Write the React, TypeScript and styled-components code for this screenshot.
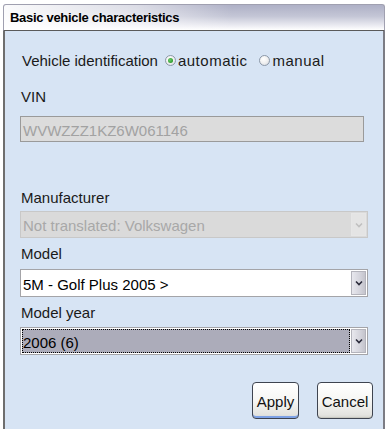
import React from "react";
import styled, { createGlobalStyle } from "styled-components";

const GlobalStyle = createGlobalStyle`
  html, body { margin: 0; padding: 0; background: #ffffff; }
  body { font-family: "Liberation Sans", Arial, sans-serif; }
`;

const Window = styled.div`
  margin: 4px 0 0 3px;
  width: 382px;
  display: flex;
  flex-direction: column;
`;

const TitleBar = styled.div`
  box-sizing: border-box;
  height: 27px;
  display: flex;
  align-items: center;
  padding-left: 6px;
  border: 1px solid #a0a0b0;
  border-bottom: 1px solid #5a5a5a;
  border-radius: 3px 3px 0 0;
  background:
    linear-gradient(to right, rgba(255,255,255,0.95) 0%, rgba(255,255,255,0.55) 35%, rgba(255,255,255,0) 60%),
    linear-gradient(to bottom, #aeb0c6 0%, #c4c6d6 45%, #eeeef4 85%, #ffffff 100%);
  font-weight: bold;
  font-size: 13px;
  letter-spacing: -0.3px;
  color: #000;
`;

const Panel = styled.div`
  box-sizing: border-box;
  height: 398px;
  background: #d7e4f4;
  border-left: 2px solid #6e6e6e;
  border-right: 2px solid #7c7c84;
  padding: 0 10px 0 15px;
  display: flex;
  flex-direction: column;
  font-size: 15px;
  color: #1a1a1a;
`;

const IdentRow = styled.div`
  margin-top: 19px;
  height: 20px;
  display: flex;
  align-items: center;
  padding-left: 2px;
`;

const RadioLabel = styled.span<{ $ml: number }>`
  display: inline-flex;
  align-items: center;
  margin-left: ${(p) => p.$ml}px;
  letter-spacing: 0.5px;
`;

const RadioCircle = styled.span<{ $checked?: boolean }>`
  box-sizing: border-box;
  width: 11px;
  height: 11px;
  border-radius: 50%;
  border: 1px solid #8c98a8;
  background: radial-gradient(circle at 40% 35%, #ffffff 0%, #f0f0f0 50%, #d0d4dc 100%);
  margin-right: 2px;
  display: inline-flex;
  align-items: center;
  justify-content: center;
  &::after {
    content: "";
    display: ${(p) => (p.$checked ? "block" : "none")};
    width: 5px;
    height: 5px;
    border-radius: 50%;
    background: radial-gradient(circle at 40% 40%, #6ccf6c 0%, #2f9a2f 70%, #5aa85a 100%);
  }
`;

const Label = styled.div<{ $mt: number }>`
  margin-top: ${(p) => p.$mt}px;
  height: 20px;
  line-height: 20px;
  padding-left: 1px;
`;

const TextBox = styled.div<{ $mt: number }>`
  box-sizing: border-box;
  margin-top: ${(p) => p.$mt}px;
  width: 344px;
  height: 26px;
  border: 1px solid #9a9a9a;
  background: #dcdcdc;
  color: #a2a2a2;
  padding: 3px 0 0 2px;
  display: flex;
  align-items: center;
`;

type SelectProps = { $mt: number; $variant: "disabled" | "normal" | "focused" };

const Select = styled.div<SelectProps>`
  box-sizing: border-box;
  margin-top: ${(p) => p.$mt}px;
  width: 348px;
  height: ${(p) => (p.$variant === "disabled" ? 27 : 28)}px;
  border: 1px solid ${(p) => (p.$variant === "disabled" ? "#c8c8c8" : "#a4a4a8")};
  background: ${(p) => (p.$variant === "disabled" ? "#dadada" : "#ffffff")};
  color: ${(p) => (p.$variant === "disabled" ? "#a8a8a8" : "#000")};
  display: flex;
  align-items: stretch;
  padding: 1px;
`;

const SelectValue = styled.div<{ $focused?: boolean }>`
  flex: 1;
  display: flex;
  align-items: center;
  padding-left: 1px;
  padding-top: 2px;
  background: ${(p) => (p.$focused ? "#acacba" : "transparent")};
  outline: ${(p) => (p.$focused ? "1px dotted #000" : "none")};
  outline-offset: -1px;
  margin-right: 1px;
`;

const ArrowButton = styled.div<{ $disabled?: boolean }>`
  box-sizing: border-box;
  width: 15px;
  display: flex;
  align-items: center;
  justify-content: center;
  border: 1px solid ${(p) => (p.$disabled ? "#e6e6e6" : "#b4b4bc")};
  background: ${(p) =>
    p.$disabled
      ? "#e4e4e4"
      : "linear-gradient(to right, #e8e8ee 0%, #d4d4dc 60%, #c4c4cc 100%)"};
`;

const Chevron = ({ color }: { color: string }) => (
  <svg width="8" height="6" viewBox="0 0 8 6">
    <path d="M1 1.5 L4 4.5 L7 1.5" fill="none" stroke={color} strokeWidth="1.6" />
  </svg>
);

const ButtonRow = styled.div`
  margin-top: 27px;
  display: flex;
  justify-content: flex-end;
  gap: 18px;
`;

const Button = styled.button<{ $w: number; $default?: boolean }>`
  box-sizing: border-box;
  width: ${(p) => p.$w}px;
  height: 37px;
  border: 1px solid #3e4450;
  border-radius: 4px;
  background: linear-gradient(to bottom, #ffffff 0%, #f6f6f4 50%, #e4e4e0 90%, #d6d6d0 100%);
  box-shadow: ${(p) =>
    p.$default
      ? "inset 0 -2px 0 #7ea2e6, inset 0 1px 0 #fff"
      : "inset 0 -1px 0 #c8c8c0"};
  font-family: "Liberation Sans", Arial, sans-serif;
  font-size: 15px;
  color: #111;
  padding: 1px 0 0 0;
  cursor: pointer;
`;

export default function App() {
  return (
    <>
      <GlobalStyle />
      <Window>
        <TitleBar>Basic vehicle characteristics</TitleBar>
        <Panel>
          <IdentRow>
            Vehicle identification
            <RadioLabel $ml={7}>
              <RadioCircle $checked />
              automatic
            </RadioLabel>
            <RadioLabel $ml={12}>
              <RadioCircle />
              manual
            </RadioLabel>
          </IdentRow>
          <Label $mt={17}>VIN</Label>
          <TextBox $mt={9}>WVWZZZ1KZ6W061146</TextBox>
          <Label $mt={46}>Manufacturer</Label>
          <Select $mt={3} $variant="disabled">
            <SelectValue>Not translated: Volkswagen</SelectValue>
            <ArrowButton $disabled>
              <Chevron color="#c0c0c0" />
            </ArrowButton>
          </Select>
          <Label $mt={6}>Model</Label>
          <Select $mt={5} $variant="normal">
            <SelectValue>5M - Golf Plus 2005 &gt;</SelectValue>
            <ArrowButton>
              <Chevron color="#2a2a3a" />
            </ArrowButton>
          </Select>
          <Label $mt={6}>Model year</Label>
          <Select $mt={4} $variant="focused">
            <SelectValue $focused>2006 (6)</SelectValue>
            <ArrowButton>
              <Chevron color="#2a2a3a" />
            </ArrowButton>
          </Select>
          <ButtonRow>
            <Button $w={47} $default>Apply</Button>
            <Button $w={56}>Cancel</Button>
          </ButtonRow>
        </Panel>
      </Window>
    </>
  );
}
